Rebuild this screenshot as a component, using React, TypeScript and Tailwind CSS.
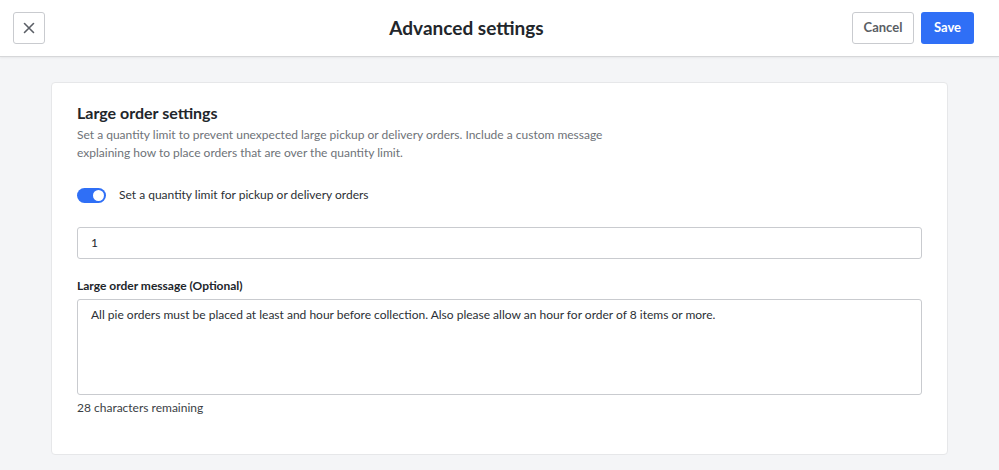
import React from "react";

export default function App() {
  return (
    <div className="w-[999px] h-[470px] bg-[#f4f5f7] overflow-hidden text-[#22262b]" style={{ fontFamily: "Lato, 'Noto Sans', sans-serif" }}>
      <div className="h-[57px] bg-white border-b border-[#d6d7d9] shadow-[0_1px_2px_rgba(0,0,0,0.06)] flex items-center px-[13px]">
        <button className="w-[32px] h-[32px] border border-[#c9cbcf] rounded-[3px] flex items-center justify-center text-[#5b5f66]">
          <svg width="14" height="14" viewBox="0 0 14 14" fill="none" stroke="currentColor" strokeWidth="1.6" strokeLinecap="round">
            <path d="M2.5 2.5 L11.5 11.5 M11.5 2.5 L2.5 11.5" />
          </svg>
        </button>
        <div className="flex-1 text-center text-[19px] font-bold pl-[36px]">Advanced settings</div>
        <div className="flex gap-[7px] pr-[12px]">
          <button className="h-[32px] w-[62px] border border-[#c9cbcf] rounded-[3px] text-[13px] font-bold text-[#5a5e64] bg-white">Cancel</button>
          <button className="h-[32px] w-[53px] rounded-[3px] text-[13px] font-bold text-white bg-[#2f6ff6]">Save</button>
        </div>
      </div>
      <div className="mx-[51px] mt-[25px] bg-white rounded-[4px] border border-[#e6e7e9] h-[373px] px-[25px] pt-[19px]">
        <div className="text-[16px] font-bold leading-[22px]">Large order settings</div>
        <p className="mt-[2px] text-[12px] leading-[18px] text-[#6e7278] w-[530px]">
          Set a quantity limit to prevent unexpected large pickup or delivery orders. Include a custom message explaining how to place orders that are over the quantity limit.
        </p>
        <div className="mt-[24px] flex items-center gap-[13px]">
          <div className="w-[29px] h-[15px] rounded-full bg-[#2f6ff6] relative">
            <div className="absolute right-[2px] top-[2px] w-[11px] h-[11px] rounded-full bg-white" />
          </div>
          <span className="text-[12px] text-[#2b2f35]">Set a quantity limit for pickup or delivery orders</span>
        </div>
        <div className="mt-[23px] h-[32px] border border-[#c9cbcf] rounded-[3px] flex items-center px-[13px] text-[12px]">1</div>
        <div className="mt-[18px] text-[12px] font-bold leading-[18px]">Large order message (Optional)</div>
        <div className="mt-[4px] h-[96px] border border-[#c9cbcf] rounded-[3px] px-[13px] pt-[6px] text-[12px] text-[#2b2f35]">
          All pie orders must be placed at least and hour before collection. Also please allow an hour for order of 8 items or more.
        </div>
        <div className="mt-[4px] text-[12px] text-[#3a3e44]">28 characters remaining</div>
      </div>
    </div>
  );
}
